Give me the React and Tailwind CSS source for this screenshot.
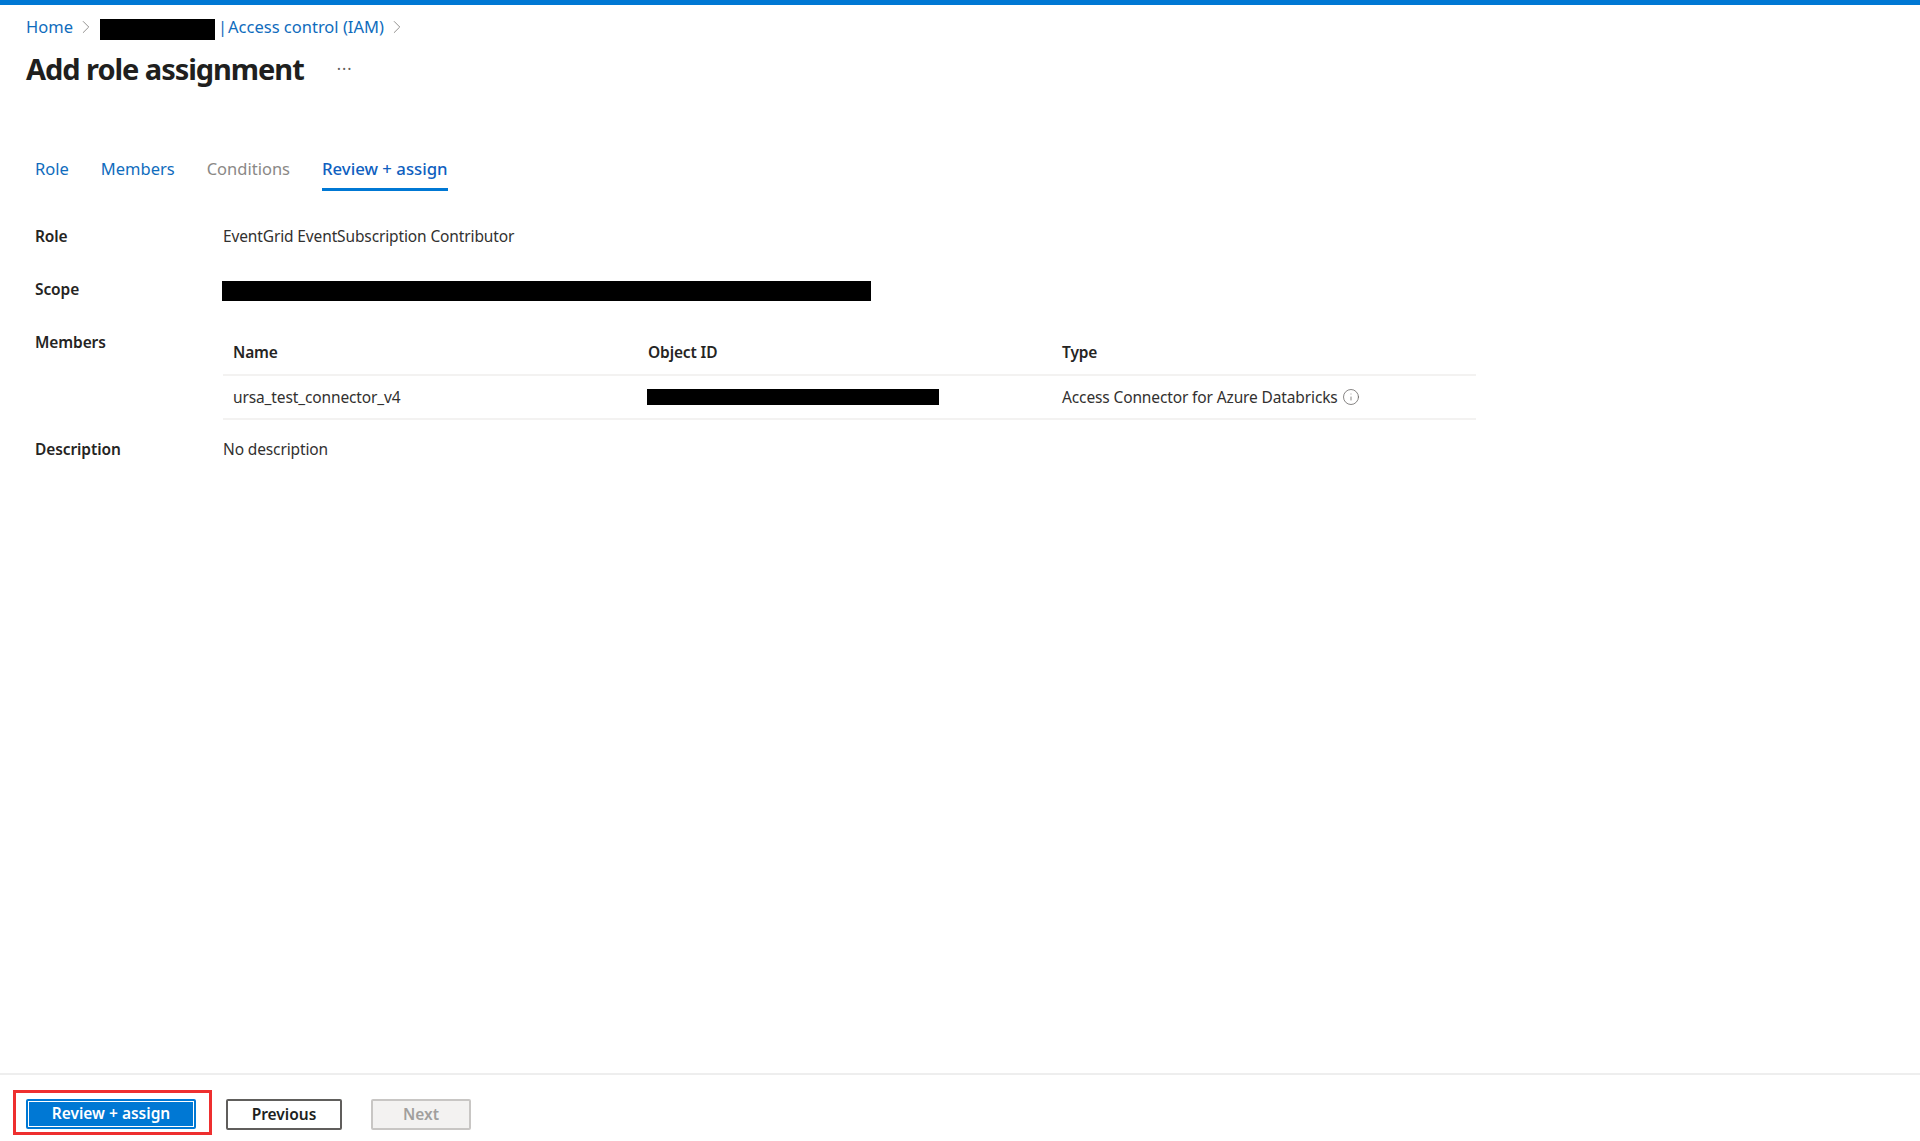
import React from 'react';
import { ChevronRight, Info } from 'lucide-react';

const font = 'font-["Noto_Sans",sans-serif]';

function Row({ label, children, className = '' }) {
  return (
    <div className={`flex ${className}`}>
      <div className="w-[187px] shrink-0 text-[15.5px] font-semibold leading-[22px] tracking-[-0.1px] text-[#252423]">{label}</div>
      <div className="flex-1 min-w-0 text-[15.5px] leading-[22px] tracking-[-0.13px] text-[#323130]">{children}</div>
    </div>
  );
}

export default function App() {
  return (
    <div className={`${font} flex h-[1141px] w-[1920px] flex-col overflow-hidden bg-white`}>
      <div className="h-[5px] shrink-0 bg-[#0078d4]"></div>

      {/* Breadcrumb */}
      <div className="mt-[11px] flex h-[22px] items-center pl-[26px] text-[16.5px] leading-[22px] text-[#0f6cbd]">
        <span>Home</span>
        <ChevronRight className="ml-[2px] h-[22px] w-[22px] text-[#8a8886]" strokeWidth={1} />
        <div className="ml-[3px] mt-[4px] h-[21px] w-[115px] bg-black"></div>
        <span className="ml-[3px]">|</span>
        <span className="ml-[1px]">Access control (IAM)</span>
        <ChevronRight className="ml-[2px] h-[22px] w-[22px] text-[#8a8886]" strokeWidth={1} />
      </div>

      {/* Title */}
      <div className="mt-[11px] flex h-[40px] items-center pl-[26px]">
        <h1 className="text-[29px] font-bold leading-[40px] tracking-[-1.05px] text-[#201f1e]">Add role assignment</h1>
        <span className="ml-[33px] text-[16px] leading-[20px] tracking-[1px] text-[#605e5c]">···</span>
      </div>

      {/* Tabs */}
      <div className="mt-[68px] flex h-[34px] items-start gap-[32px] pl-[35px] text-[16.5px] leading-[24px]">
        <span className="text-[#0f6cbd]">Role</span>
        <span className="text-[#0f6cbd]">Members</span>
        <span className="text-[#8a8886]">Conditions</span>
        <span className="h-[34px] border-b-[3px] border-[#0078d4] text-[16.75px] font-medium text-[#0f5fc0]">Review + assign</span>
      </div>

      {/* Details */}
      <div className="mt-[34px] flex w-[1476px] flex-col pl-[35px]">
        <Row label="Role"><span className="ml-[1px]">EventGrid EventSubscription Contributor</span></Row>
        <Row label="Scope" className="mt-[31px]">
          <div className="mt-[3px] h-[20px] w-[649px] bg-black"></div>
        </Row>
        <Row label="Members" className="mt-[30px]">
          <div className="ml-[1px] grid grid-cols-[415px_414px_1fr] border-b-2 border-[#f3f2f1] font-normal">
            <div className="border-b-2 border-[#f3f2f1] pb-[11px] pl-[10px] pt-[10px] font-semibold text-[#252423]">Name</div>
            <div className="border-b-2 border-[#f3f2f1] pb-[11px] pl-[10px] pt-[10px] font-semibold text-[#252423]">Object ID</div>
            <div className="border-b-2 border-[#f3f2f1] pb-[11px] pl-[10px] pt-[10px] font-semibold text-[#252423]">Type</div>
            <div className="flex h-[42px] items-center pl-[10px]">ursa_test_connector_v4</div>
            <div className="flex h-[42px] items-center pl-[9px]">
              <div className="h-[16px] w-[292px] bg-black"></div>
            </div>
            <div className="flex h-[42px] items-center pl-[10px]">
              <span>Access Connector for Azure Databricks</span>
              <Info className="ml-[4px] -mt-[1px] h-[18px] w-[18px] text-[#605e5c]" strokeWidth={1} />
            </div>
          </div>
        </Row>
        <Row label="Description" className="mt-[18px]"><span className="ml-[1px]">No description</span></Row>
      </div>

      {/* Footer */}
      <div className="mt-auto flex h-[68px] shrink-0 items-start border-t-2 border-[#eeeeee] pl-[13px] pt-[15px]">
        <div className="flex h-[45px] w-[199px] items-center border-[3px] border-[#ee2f2f] pl-[10px]">
          <button className="mt-[3px] h-[30px] w-[170px] rounded-[2px] bg-[#0078d4] text-[15.5px] font-semibold text-white outline outline-1 -outline-offset-3 outline-white">
            Review + assign
          </button>
        </div>
        <button className="ml-[14px] mt-[9px] h-[31px] w-[116px] rounded-[2px] border-2 border-[#605e5c] bg-white text-[15.5px] font-semibold text-[#201f1e]">
          Previous
        </button>
        <button className="ml-[29px] mt-[9px] h-[31px] w-[100px] rounded-[2px] border-2 border-[#c8c6c4] bg-[#f3f2f1] text-[15.5px] font-semibold text-[#a19f9d]">
          Next
        </button>
      </div>
    </div>
  );
}
